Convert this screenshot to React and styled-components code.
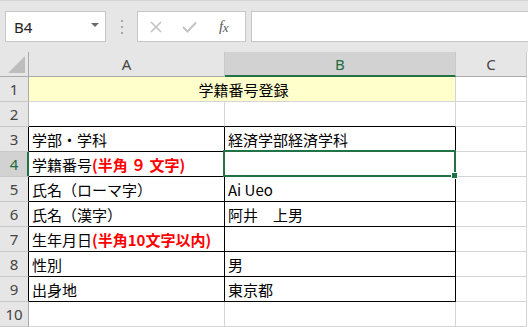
import React from 'react'
import styled, { createGlobalStyle } from 'styled-components'

const GlobalStyle = createGlobalStyle`
  html, body {
    margin: 0;
    padding: 0;
    background: #ffffff;
    overflow: hidden;
  }
  * { box-sizing: border-box; }
`

const Page = styled.div`
  width: 528px;
  height: 327px;
  background: #ffffff;
  overflow: hidden;
`

const Toolbar = styled.div`
  height: 52px;
  background: #e6e6e6;
  border-top: 1px solid #d4d4d4;
  display: flex;
  align-items: flex-start;
  padding: 10px 0 0 5px;
`

const NameBox = styled.div`
  width: 101px;
  height: 31px;
  background: #fff;
  border: 1px solid #c6c6c6;
  display: flex;
  align-items: center;
  justify-content: space-between;
  padding: 0 6px 0 8px;
  font-family: "Noto Sans", "Liberation Sans", sans-serif;
  font-size: 15px;
  color: #222;
`

const DropArrow = styled.span`
  width: 0;
  height: 0;
  border-left: 4px solid transparent;
  border-right: 4px solid transparent;
  border-top: 4px solid #6a6a6a;
  margin-top: -3px;
`

const Grip = styled.div`
  width: 31px;
  height: 31px;
  display: flex;
  flex-direction: column;
  align-items: center;
  justify-content: center;
  gap: 2px;
  span {
    width: 2px;
    height: 2px;
    background: #a6a6a6;
    display: block;
    margin: 1px 0;
  }
`

const FxButtons = styled.div`
  width: 109px;
  height: 31px;
  background: #fff;
  border: 1px solid #c6c6c6;
  display: flex;
  align-items: center;
  padding: 0 0 0 12px;
  gap: 20px;
`

const FxLabel = styled.span`
  font-family: "Liberation Serif", serif;
  font-style: italic;
  font-size: 15px;
  color: #5a5a5a;
  margin-left: 2px;
  letter-spacing: -0.5px;
  span {
    font-size: 13px;
    position: relative;
    top: 1px;
  }
`

const FormulaInput = styled.div`
  flex: 1;
  height: 31px;
  margin-left: 5px;
  background: #fff;
  border: 1px solid #c6c6c6;
  border-right: none;
`

const Sheet = styled.div`
  display: grid;
  grid-template-columns: 29px 196px 231px 71px;
  grid-template-rows: 25px;
  grid-auto-rows: 25px;
  font-family: "Noto Sans CJK JP", "Noto Sans", sans-serif;
`

const HeadCell = styled.div`
  background: ${p => (p.$active ? '#d2d2d2' : '#e6e6e6')};
  color: ${p => (p.$active ? '#1e6b41' : '#444')};
  border-right: 1px solid #c9c9c9;
  border-bottom: ${p => (p.$active ? '2px solid #217346' : '1px solid #ababab')};
  display: flex;
  align-items: center;
  justify-content: center;
  font-family: "Noto Sans", "Open Sans", sans-serif;
  font-size: 15px;
  padding-top: ${p => (p.$active ? '1px' : '0')};
`

const Corner = styled(HeadCell)`
  align-items: flex-end;
  justify-content: flex-end;
  padding: 0 3px 3px 0;
  border-right: 1px solid #ababab;
`

const RowHead = styled.div`
  background: ${p => (p.$active ? '#d2d2d2' : '#e6e6e6')};
  color: ${p => (p.$active ? '#1e6b41' : '#444')};
  border-right: 1px solid ${p => p.$edge};
  box-shadow: ${p => (p.$active ? 'inset -1px 0 0 #217346' : 'none')};
  border-bottom: 1px solid #c9c9c9;
  display: flex;
  align-items: center;
  justify-content: center;
  font-family: "Noto Sans", "Open Sans", sans-serif;
  font-size: 15px;
`

const Cell = styled.div`
  position: relative;
  grid-column: ${p => (p.$span ? `span ${p.$span}` : 'auto')};
  background: ${p => p.$fill || '#fff'};
  border-right: 1px solid ${p => p.$right || '#d4d4d4'};
  border-bottom: 1px solid ${p => p.$bottom || '#d4d4d4'};
  display: flex;
  align-items: center;
  justify-content: ${p => (p.$center ? 'center' : 'flex-start')};
  padding: 1px 0 0 3px;
  font-size: 15px;
  color: #000;
  white-space: nowrap;
  overflow: visible;
`

const Red = styled.span`
  color: #ff0000;
  font-weight: 700;
`

const Selection = styled.div`
  position: absolute;
  top: -2px;
  left: -2px;
  width: calc(100% + 3px);
  height: calc(100% + 3px);
  border: 2px solid #217346;
  z-index: 2;
  pointer-events: none;
`

const Handle = styled.div`
  position: absolute;
  right: -4px;
  bottom: -4px;
  width: 7px;
  height: 7px;
  background: #217346;
  border: 1px solid #fff;
`

const BLACK = '#000'

const rows = [
  { a: null, b: null },
  { a: '', b: '' },
  { a: '学部・学科', b: '経済学部経済学科' },
  { a: <>学籍番号<Red>(半角 ９ 文字)</Red></>, b: '', selected: true },
  { a: '氏名（ローマ字）', b: 'Ai Ueo' },
  { a: '氏名（漢字）', b: '阿井　上男' },
  { a: <>生年月日<Red>(半角10文字以内)</Red></>, b: '' },
  { a: '性別', b: '男' },
  { a: '出身地', b: '東京都' },
  { a: '', b: '' },
]

export default function App() {
  return (
    <Page>
      <GlobalStyle />
      <Toolbar>
        <NameBox>
          B4
          <DropArrow />
        </NameBox>
        <Grip>
          <span />
          <span />
          <span />
        </Grip>
        <FxButtons>
          <svg width="12" height="12" viewBox="0 0 12 12">
            <path d="M1 1 L11 11 M11 1 L1 11" stroke="#c3c3c3" strokeWidth="1.6" fill="none" />
          </svg>
          <svg width="15" height="12" viewBox="0 0 15 12">
            <path d="M1 6 L5.5 10.5 L14 1.5" stroke="#c3c3c3" strokeWidth="2" fill="none" />
          </svg>
          <FxLabel>f<span>x</span></FxLabel>
        </FxButtons>
        <FormulaInput />
      </Toolbar>
      <Sheet>
        <Corner>
          <svg width="17" height="17" viewBox="0 0 17 17">
            <polygon points="17,0 17,17 0,17" fill="#bdbdbd" />
          </svg>
        </Corner>
        <HeadCell>A</HeadCell>
        <HeadCell $active>B</HeadCell>
        <HeadCell>C</HeadCell>
        {rows.map((r, i) => {
          const n = i + 1
          const boxed = n >= 3 && n <= 9
          const edge = n === 4 ? '#217346' : boxed ? BLACK : '#ababab'
          const bottom = n >= 2 && n <= 9 ? BLACK : undefined
          if (n === 1) {
            return (
              <React.Fragment key={n}>
                <RowHead $edge={edge}>{n}</RowHead>
                <Cell $span={2} $fill="#ffffcc" $right="#d4d4d4" $bottom="#d4d4d4" $center>
                  学籍番号登録
                </Cell>
                <Cell />
              </React.Fragment>
            )
          }
          return (
            <React.Fragment key={n}>
              <RowHead $edge={edge} $active={r.selected}>{n}</RowHead>
              <Cell $right={boxed ? BLACK : undefined} $bottom={bottom}>{r.a}</Cell>
              <Cell $right={boxed ? BLACK : undefined} $bottom={bottom}>
                {r.b}
                {r.selected && (
                  <Selection>
                    <Handle />
                  </Selection>
                )}
              </Cell>
              <Cell />
            </React.Fragment>
          )
        })}
      </Sheet>
    </Page>
  )
}
